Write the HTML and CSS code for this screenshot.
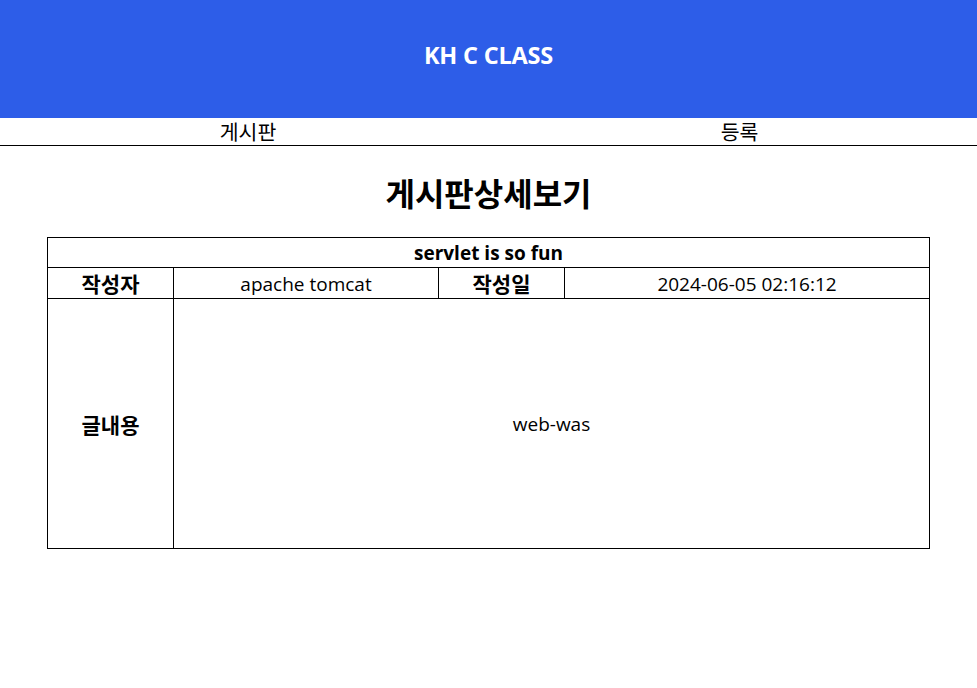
FILE: index.html
```html
<!DOCTYPE html>
<html lang="ko">
<head>
<meta charset="utf-8">
<title>KH C CLASS</title>
<link rel="stylesheet" href="styles.css">
</head>
<body>
<header class="site-header">
  <h1 class="brand">KH C CLASS</h1>
</header>
<nav class="nav">
  <a class="nav-item nav-first" href="#">게시판</a>
  <a class="nav-item nav-second" href="#">등록</a>
</nav>
<main class="content">
  <h2 class="page-title">게시판상세보기</h2>
  <table class="detail">
    <colgroup>
      <col class="c1"><col class="c2"><col class="c3"><col class="c4">
    </colgroup>
    <tr class="row-title">
      <th colspan="4">servlet is so fun</th>
    </tr>
    <tr class="row-meta">
      <th class="ko">작성자</th>
      <td>apache tomcat</td>
      <th class="ko">작성일</th>
      <td>2024-06-05 02:16:12</td>
    </tr>
    <tr class="row-body">
      <th class="ko">글내용</th>
      <td colspan="3">web-was</td>
    </tr>
  </table>
</main>
</body>
</html>
```

FILE: styles.css
```css
html, body {
  margin: 0;
  padding: 0;
  background: #fff;
  color: #000;
  font-family: "Open Sans", "Noto Sans CJK KR", sans-serif;
}

.site-header {
  height: 118px;
  box-sizing: border-box;
  padding-bottom: 8px;
  background: #2d5de8;
  display: flex;
  align-items: center;
  justify-content: center;
}

.brand {
  margin: 0;
  color: #fff;
  font-size: 23.5px;
  font-weight: 700;
  letter-spacing: -0.2px;
}

.nav {
  display: grid;
  grid-template-columns: 496px 1fr;
  height: 27px;
  border-bottom: 1px solid #000;
  align-items: center;
}

.nav-item {
  text-align: center;
  color: #000;
  text-decoration: none;
  font-family: "Noto Sans CJK KR", sans-serif;
  font-size: 20.5px;
  font-weight: 400;
  line-height: 27px;
}

.nav-second {
  padding-left: 6px;
}

.content {
  padding-top: 26px;
}

.page-title {
  margin: 0 0 25px;
  text-align: center;
  font-family: "Noto Sans CJK KR", sans-serif;
  font-size: 32px;
  font-weight: 700;
  line-height: 40px;
}

.detail {
  width: 883px;
  margin: 0 auto;
  border-collapse: collapse;
  table-layout: fixed;
  font-size: 19px;
}

.c1 { width: 126px; }
.c2 { width: 265px; }
.c3 { width: 126px; }
.c4 { width: auto; }

.detail th,
.detail td {
  border: 1px solid #000;
  padding: 1px 0 0;
  text-align: center;
  vertical-align: middle;
  line-height: 24px;
}

.detail th {
  font-weight: 700;
}

.detail .ko {
  font-family: "Noto Sans CJK KR", sans-serif;
  font-size: 21px;
  padding-top: 0;
}

.row-title th { height: 28px; }
.row-meta th, .row-meta td { height: 29px; }
.row-body th, .row-body td { height: 248px; }
```
